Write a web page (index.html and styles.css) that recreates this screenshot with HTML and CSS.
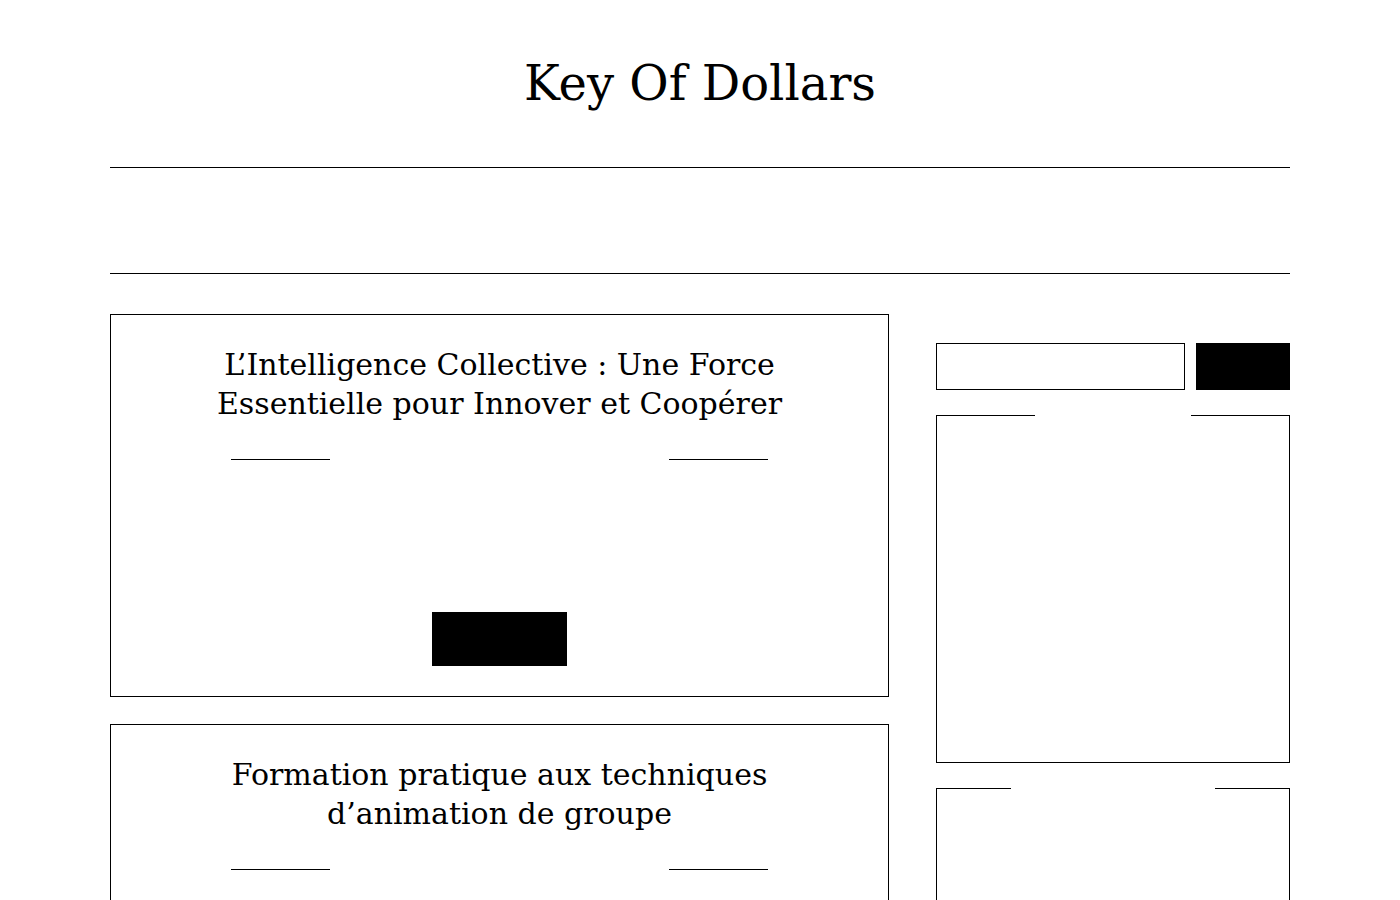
FILE: index.html
```html
<!DOCTYPE html>
<html lang="fr">
<head>
<meta charset="utf-8">
<title>Key Of Dollars</title>
<link rel="stylesheet" href="styles.css">
</head>
<body>
<div class="page">
  <header class="site-header">
    <h1 class="site-title">Key Of Dollars</h1>
  </header>
  <nav class="site-nav">
    <ul class="nav-list">
      <li><a href="#">Accueil</a></li>
      <li><a href="#">Blog</a></li>
      <li><a href="#">Contact</a></li>
    </ul>
  </nav>
  <div class="layout">
    <main class="posts">
      <article class="post-card">
        <h2 class="post-title">L’Intelligence Collective : Une Force Essentielle pour Innover et Coopérer</h2>
        <div class="post-meta"><span class="meta-line"></span><span class="meta-text">12 mars 2024</span><span class="meta-line"></span></div>
        <p class="post-excerpt">L’intelligence collective permet aux équipes de mieux innover et de coopérer efficacement.</p>
        <a class="read-more" href="#">Lire la suite</a>
      </article>
      <article class="post-card">
        <h2 class="post-title">Formation pratique aux techniques d’animation de groupe</h2>
        <div class="post-meta"><span class="meta-line"></span><span class="meta-text">5 mars 2024</span><span class="meta-line"></span></div>
        <p class="post-excerpt">Découvrez les techniques d’animation de groupe.</p>
        <a class="read-more" href="#">Lire la suite</a>
      </article>
    </main>
    <aside class="sidebar">
      <form class="search-form">
        <input class="search-input" type="text" aria-label="Rechercher">
        <button class="search-button" type="button">OK</button>
      </form>
      <fieldset class="widget">
        <legend class="widget-title widget-title-recent">Articles récents</legend>
        <div class="widget-body widget-body-recent"></div>
      </fieldset>
      <fieldset class="widget">
        <legend class="widget-title widget-title-cats">Catégories</legend>
        <div class="widget-body widget-body-cats"></div>
      </fieldset>
    </aside>
  </div>
</div>
</body>
</html>
```
FILE: styles.css
```css
html, body {
  margin: 0;
  padding: 0;
  background: #fff;
}
body {
  font-family: "DejaVu Serif", serif;
  color: #000;
}
.page {
  max-width: 1180px;
  margin: 0 auto;
}
.site-header {
  padding: 55px 0 55px;
  text-align: center;
}
.site-title {
  margin: 0;
  font-size: 48px;
  line-height: 57px;
  font-weight: normal;
}
.site-nav {
  border-top: 1px solid #000;
  border-bottom: 1px solid #000;
  height: 105px;
}
.nav-list {
  list-style: none;
  margin: 0;
  padding: 40px 0 0;
  display: flex;
  justify-content: center;
  gap: 30px;
}
.nav-list a {
  color: #fff;
  text-decoration: none;
  font-size: 16px;
  line-height: 24px;
}
.layout {
  display: grid;
  grid-template-columns: 779px 354px;
  column-gap: 47px;
  margin-top: 40px;
}
.post-card {
  border: 1px solid #000;
  padding: 30px 60px;
  margin-bottom: 27px;
  text-align: center;
}
.post-title {
  margin: 0;
  font-size: 30px;
  line-height: 39px;
  font-weight: normal;
}
.post-meta {
  display: flex;
  align-items: center;
  width: 537px;
  height: 24px;
  margin: 24px auto 0;
}
.meta-line {
  width: 99px;
  height: 1px;
  background: #000;
  flex: none;
}
.meta-text {
  flex: 1;
  color: #fff;
  font-size: 15px;
  line-height: 24px;
}
.post-excerpt {
  margin: 0;
  height: 141px;
  overflow: hidden;
  color: #fff;
  font-size: 16px;
  line-height: 24px;
  box-sizing: border-box;
  padding-top: 20px;
}
.read-more {
  display: block;
  width: 135px;
  height: 54px;
  margin: 0 auto;
  background: #000;
  color: #000;
  text-decoration: none;
  font-size: 16px;
  line-height: 54px;
}
.sidebar {
  padding-top: 29px;
}
.search-form {
  display: flex;
  gap: 11px;
  height: 47px;
}
.search-input {
  box-sizing: border-box;
  width: 249px;
  height: 47px;
  margin: 0;
  border: 1px solid #000;
  border-radius: 0;
  padding: 0 10px;
  background: #fff;
}
.search-button {
  box-sizing: border-box;
  width: 94px;
  height: 47px;
  margin: 0;
  border: none;
  border-radius: 0;
  background: #000;
  color: #000;
  font-family: "DejaVu Serif", serif;
}
.widget {
  margin: 13px 0 0;
  padding: 0;
  border: 1px solid #000;
  min-width: 0;
}
.widget-title {
  box-sizing: border-box;
  margin: 0 auto;
  padding: 0;
  text-align: center;
  font-size: 16px;
  line-height: 24px;
  color: #fff;
  white-space: nowrap;
  overflow: hidden;
}
.widget-title-recent {
  width: 156px;
}
.widget-title-cats {
  width: 204px;
}
.widget-body-recent {
  height: 335px;
}
.widget-body-cats {
  height: 300px;
}
```
